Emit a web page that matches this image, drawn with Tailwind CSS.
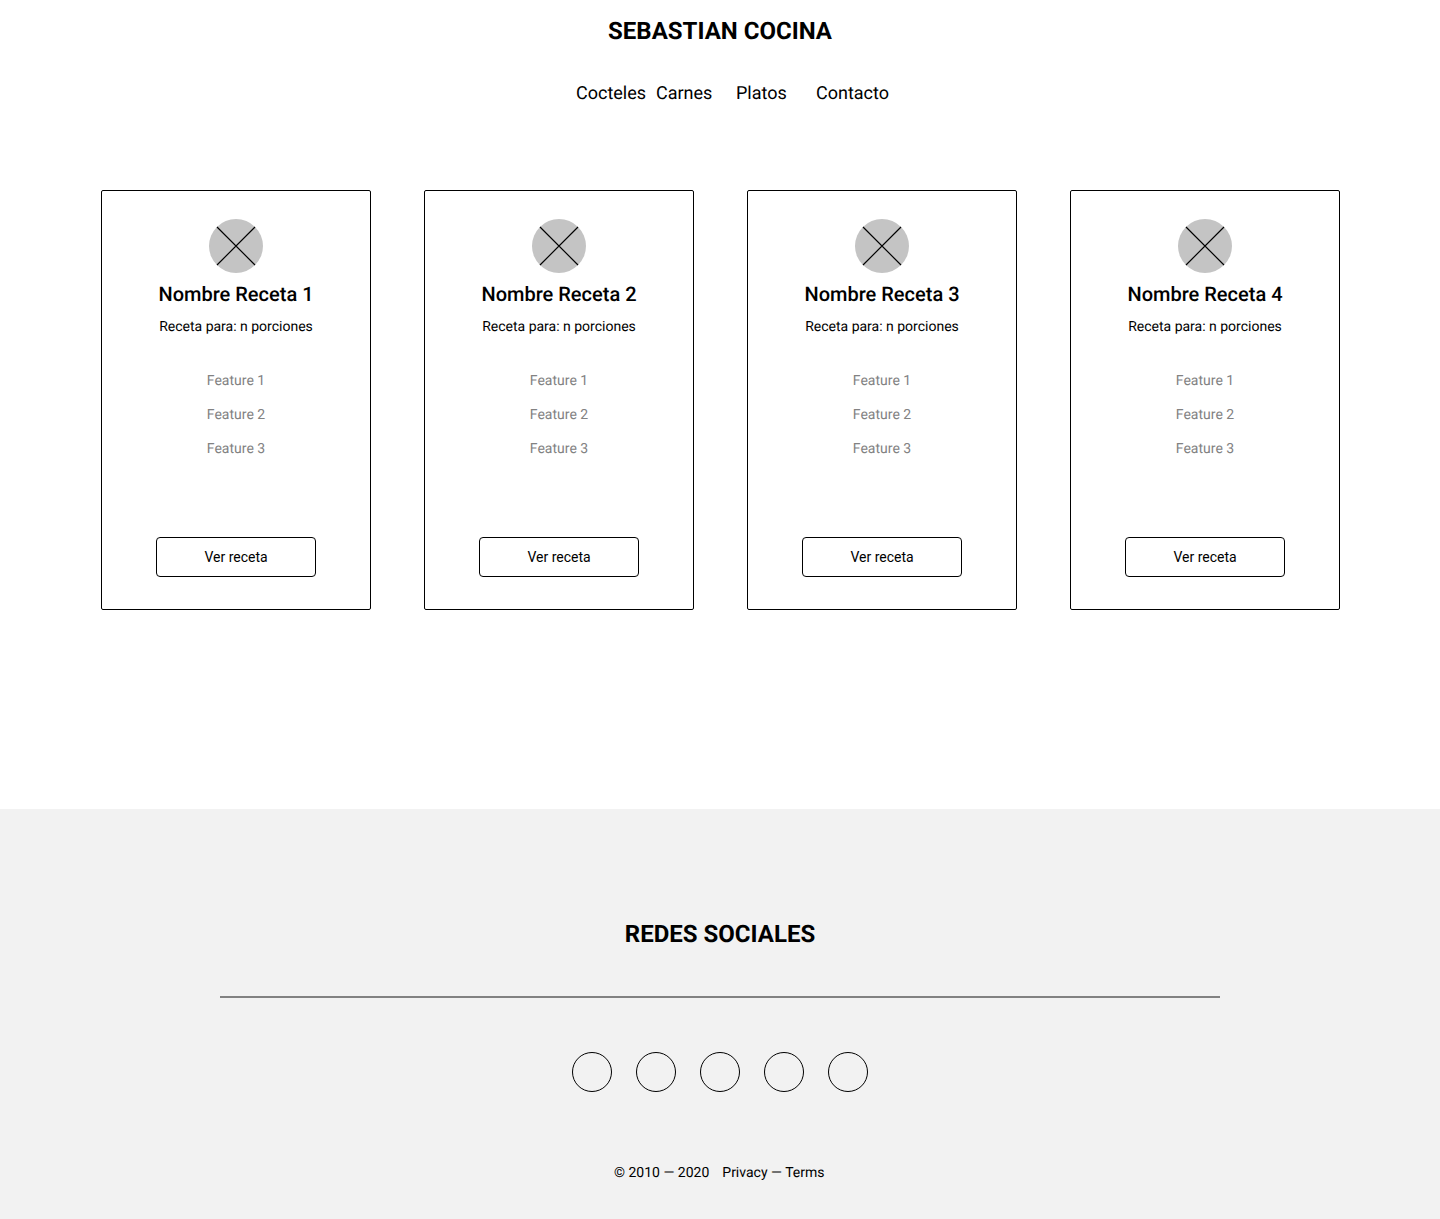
<!DOCTYPE html>
<html lang="es">
<head>
  <meta charset="UTF-8" />
  <title>Sebastian Cocina</title>
  <script src="https://cdn.jsdelivr.net/npm/@tailwindcss/browser@4"></script>
</head>
<body class="bg-white text-black font-['Roboto',sans-serif] [text-rendering:geometricPrecision]">

<!-- Encabezado -->
<header class="h-[190px] pt-[16px]">
  <h1 class="text-[24px] leading-[30px] font-bold text-center">SEBASTIAN COCINA</h1>
  <nav class="mt-[33px] ml-[576px] flex text-[18px] leading-[30px]">
    <a class="w-[80px]">Cocteles</a>
    <a class="w-[80px]">Carnes</a>
    <a class="w-[80px]">Platos</a>
    <a>Contacto</a>
  </nav>
</header>

<!-- Recetas -->
<main class="h-[619px] pl-[101px]">
  <div class="flex gap-[53px]">

    <article class="w-[270px] h-[420px] border border-black rounded-[2px] flex flex-col items-center pt-[28px]">
      <svg class="w-[54px] h-[54px]" viewBox="0 0 54 54"><circle cx="27" cy="27" r="27" fill="#c4c4c4"/><path d="M8 8L46 46M46 8L8 46" stroke="#000" stroke-width="1.2" fill="none"/></svg>
      <h2 class="mt-[6px] text-[20px] leading-[30px] font-medium">Nombre Receta 1</h2>
      <p class="mt-[6px] text-[14px] leading-[24px]">Receta para: n porciones</p>
      <ul class="mt-[30px] text-[14px] leading-[24px] text-[#828282] text-center space-y-[10px]">
        <li>Feature 1</li><li>Feature 2</li><li>Feature 3</li>
      </ul>
      <button class="mt-[76px] w-[160px] h-[40px] border border-black rounded-[4px] text-[14px]">Ver receta</button>
    </article>

    <article class="w-[270px] h-[420px] border border-black rounded-[2px] flex flex-col items-center pt-[28px]">
      <svg class="w-[54px] h-[54px]" viewBox="0 0 54 54"><circle cx="27" cy="27" r="27" fill="#c4c4c4"/><path d="M8 8L46 46M46 8L8 46" stroke="#000" stroke-width="1.2" fill="none"/></svg>
      <h2 class="mt-[6px] text-[20px] leading-[30px] font-medium">Nombre Receta 2</h2>
      <p class="mt-[6px] text-[14px] leading-[24px]">Receta para: n porciones</p>
      <ul class="mt-[30px] text-[14px] leading-[24px] text-[#828282] text-center space-y-[10px]">
        <li>Feature 1</li><li>Feature 2</li><li>Feature 3</li>
      </ul>
      <button class="mt-[76px] w-[160px] h-[40px] border border-black rounded-[4px] text-[14px]">Ver receta</button>
    </article>

    <article class="w-[270px] h-[420px] border border-black rounded-[2px] flex flex-col items-center pt-[28px]">
      <svg class="w-[54px] h-[54px]" viewBox="0 0 54 54"><circle cx="27" cy="27" r="27" fill="#c4c4c4"/><path d="M8 8L46 46M46 8L8 46" stroke="#000" stroke-width="1.2" fill="none"/></svg>
      <h2 class="mt-[6px] text-[20px] leading-[30px] font-medium">Nombre Receta 3</h2>
      <p class="mt-[6px] text-[14px] leading-[24px]">Receta para: n porciones</p>
      <ul class="mt-[30px] text-[14px] leading-[24px] text-[#828282] text-center space-y-[10px]">
        <li>Feature 1</li><li>Feature 2</li><li>Feature 3</li>
      </ul>
      <button class="mt-[76px] w-[160px] h-[40px] border border-black rounded-[4px] text-[14px]">Ver receta</button>
    </article>

    <article class="w-[270px] h-[420px] border border-black rounded-[2px] flex flex-col items-center pt-[28px]">
      <svg class="w-[54px] h-[54px]" viewBox="0 0 54 54"><circle cx="27" cy="27" r="27" fill="#c4c4c4"/><path d="M8 8L46 46M46 8L8 46" stroke="#000" stroke-width="1.2" fill="none"/></svg>
      <h2 class="mt-[6px] text-[20px] leading-[30px] font-medium">Nombre Receta 4</h2>
      <p class="mt-[6px] text-[14px] leading-[24px]">Receta para: n porciones</p>
      <ul class="mt-[30px] text-[14px] leading-[24px] text-[#828282] text-center space-y-[10px]">
        <li>Feature 1</li><li>Feature 2</li><li>Feature 3</li>
      </ul>
      <button class="mt-[76px] w-[160px] h-[40px] border border-black rounded-[4px] text-[14px]">Ver receta</button>
    </article>

  </div>
</main>

<!-- Pie -->
<footer class="h-[410px] bg-[#f2f2f2] pt-[110px]">
  <h2 class="text-[24px] leading-[30px] font-bold text-center">REDES SOCIALES</h2>
  <div class="mt-[47px] mx-auto w-[1000px] h-[2px] bg-[#828282]"></div>
  <div class="mt-[54px] flex justify-center gap-[24px]">
    <span class="w-[40px] h-[40px] rounded-full border border-black"></span>
    <span class="w-[40px] h-[40px] rounded-full border border-black"></span>
    <span class="w-[40px] h-[40px] rounded-full border border-black"></span>
    <span class="w-[40px] h-[40px] rounded-full border border-black"></span>
    <span class="w-[40px] h-[40px] rounded-full border border-black"></span>
  </div>
  <p class="mt-[69px] ml-[614px] flex gap-[13px] text-[14px] leading-[24px]"><span>© 2010 — 2020</span><span>Privacy — Terms</span></p>
</footer>

</body>
</html>
